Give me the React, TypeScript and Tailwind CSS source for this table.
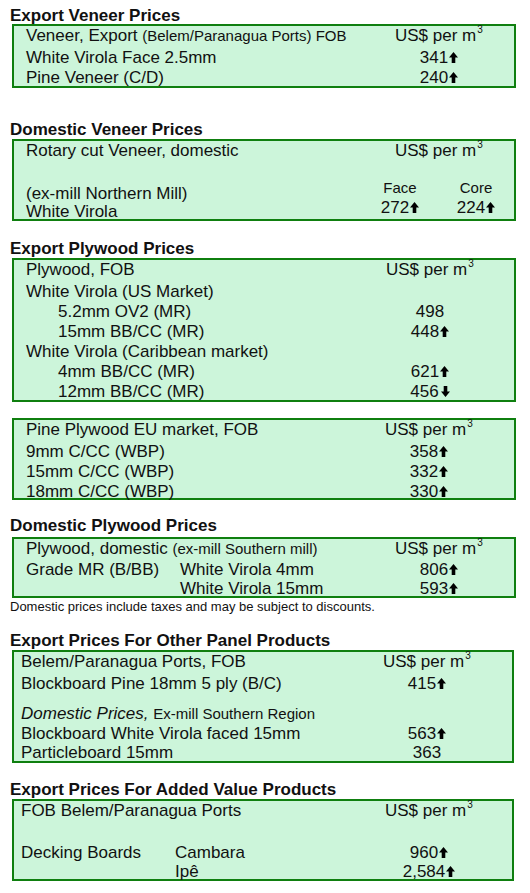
import React from 'react';

const Up = () => (
  <svg viewBox="0 0 9 11" className="inline-block w-[9px] h-[11px] ml-[1px] align-baseline" fill="#000">
    <path d="M4.5 0L9 5.6H6.3V11H2.7V5.6H0Z" />
  </svg>
);

const Down = () => (
  <svg viewBox="0 0 9 11" className="inline-block w-[9px] h-[11px] ml-[2px] align-baseline" fill="#000">
    <path d="M4.5 11L9 5.4H6.3V0H2.7V5.4H0Z" />
  </svg>
);

const Unit = () => (
  <span className="whitespace-nowrap">
    US$ per m<span className="relative -top-[8px] ml-[1px] text-[10px]">3</span>
  </span>
);

const Heading: React.FC<{ children: React.ReactNode; className?: string }> = ({ children, className = '' }) => (
  <h2 className={`text-[17px] font-bold leading-[17px] text-[#111] ${className}`}>{children}</h2>
);

const Box: React.FC<{ children: React.ReactNode; className?: string }> = ({ children, className = '' }) => (
  <div className={`ml-[2px] border-2 border-[#0f7f0f] bg-[#ccf5da] text-[17px] leading-5 text-[#111] ${className}`}>
    {children}
  </div>
);

// label column + centred value column
const Row: React.FC<{ label: React.ReactNode; value?: React.ReactNode; lw: string; indent?: boolean }> = ({
  label,
  value,
  lw,
  indent = false,
}) => (
  <div className="flex">
    <div className={`${lw} whitespace-nowrap ${indent ? 'pl-8' : ''}`}>{label}</div>
    <div className="w-[88px] text-center whitespace-nowrap">{value}</div>
  </div>
);

export default function App() {
  return (
    <div className="min-h-[893px] w-[530px] bg-white px-[10px] pt-[7px] font-['Liberation_Sans',Arial,sans-serif]">
      {/* Export Veneer */}
      <Heading>Export Veneer Prices</Heading>
      <Box className="w-[504px] h-[64px] pl-[12px]">
        <div className="flex">
          <div className="w-[369px] whitespace-nowrap">
            Veneer, Export <span className="text-[15px]">(Belem/Paranagua Ports) FOB</span>
          </div>
          <Unit />
        </div>
        <Row lw="w-[369px]" label="White Virola Face 2.5mm" value={<>341<Up /></>} />
        <Row lw="w-[369px]" label="Pine Veneer (C/D)" value={<>240<Up /></>} />
      </Box>

      {/* Domestic Veneer */}
      <Heading className="mt-[33px]">Domestic Veneer Prices</Heading>
      <Box className="mt-[1px] w-[504px] h-[82px] pl-[12px]">
        <div className="flex">
          <div className="w-[369px] whitespace-nowrap">Rotary cut Veneer, domestic</div>
          <Unit />
        </div>
        <div className="mt-[15px] flex items-end">
          <div className="w-[339px] leading-[18px]">
            <div>(ex-mill Northern Mill)</div>
            <div>White Virola</div>
          </div>
          <div className="w-[70px] pb-[3px] text-center">
            <div className="text-[15px]">Face</div>
            <div>272<Up /></div>
          </div>
          <div className="ml-[6px] w-[70px] pb-[3px] text-center">
            <div className="text-[15px]">Core</div>
            <div>224<Up /></div>
          </div>
        </div>
      </Box>

      {/* Export Plywood */}
      <Heading className="mt-[19px]">Export Plywood Prices</Heading>
      <Box className="mt-[1px] w-[504px] h-[144px] pl-[12px]">
        <div className="flex">
          <div className="w-[360px]">Plywood, FOB</div>
          <Unit />
        </div>
        <Row lw="w-[360px]" label="White Virola (US Market)" />
        <Row lw="w-[360px]" indent label="5.2mm OV2 (MR)" value="498" />
        <Row lw="w-[360px]" indent label="15mm BB/CC (MR)" value={<>448<Up /></>} />
        <Row lw="w-[360px]" label="White Virola (Caribbean market)" />
        <Row lw="w-[360px]" indent label="4mm BB/CC (MR)" value={<>621<Up /></>} />
        <Row lw="w-[360px]" indent label="12mm BB/CC (MR)" value={<>456<Down /></>} />
      </Box>

      <Box className="mt-[16px] w-[504px] h-[82px] pl-[12px]">
        <div className="flex">
          <div className="w-[359px]">Pine Plywood EU market, FOB</div>
          <Unit />
        </div>
        <Row lw="w-[359px]" label="9mm C/CC (WBP)" value={<>358<Up /></>} />
        <Row lw="w-[359px]" label="15mm C/CC (WBP)" value={<>332<Up /></>} />
        <Row lw="w-[359px]" label="18mm C/CC (WBP)" value={<>330<Up /></>} />
      </Box>

      {/* Domestic Plywood */}
      <Heading className="mt-[17px]">Domestic Plywood Prices</Heading>
      <Box className="mt-[3px] w-[504px] h-[61px] pl-[12px] leading-[19px]">
        <div className="flex">
          <div className="w-[369px] whitespace-nowrap">
            Plywood, domestic <span className="text-[15px]">(ex-mill Southern mill)</span>
          </div>
          <Unit />
        </div>
        <div className="flex">
          <div className="w-[154px]">Grade MR (B/BB)</div>
          <div className="w-[215px]">White Virola 4mm</div>
          <div className="w-[88px] text-center">806<Up /></div>
        </div>
        <div className="flex">
          <div className="w-[154px]" />
          <div className="w-[215px]">White Virola 15mm</div>
          <div className="w-[88px] text-center">593<Up /></div>
        </div>
      </Box>
      <p className="mt-[1px] text-[13px] leading-[15px] text-[#111]">
        Domestic prices include taxes and may be subject to discounts.
      </p>

      {/* Other panel products */}
      <Heading className="mt-[18px]">Export Prices For Other Panel Products</Heading>
      <Box className="mt-[1px] w-[502px] h-[113px] pl-[7px] leading-[19.5px]">
        <div className="flex">
          <div className="w-[362px]">Belem/Paranagua Ports, FOB</div>
          <Unit />
        </div>
        <Row lw="w-[362px]" label="Blockboard Pine 18mm 5 ply (B/C)" value={<>415<Up /></>} />
        <div className="mt-[11px]">
          <Row
            lw="w-[362px]"
            label={
              <>
                <i>Domestic Prices,</i> <span className="text-[15px]">Ex-mill Southern Region</span>
              </>
            }
          />
          <Row lw="w-[362px]" label="Blockboard White Virola faced 15mm" value={<>563<Up /></>} />
          <Row lw="w-[362px]" label="Particleboard 15mm" value="363" />
        </div>
      </Box>

      {/* Added value */}
      <Heading className="mt-[18px]">Export Prices For Added Value Products</Heading>
      <Box className="mt-[1px] w-[502px] h-[82px] pl-[7px]">
        <div className="flex">
          <div className="w-[364px]">FOB Belem/Paranagua Ports</div>
          <Unit />
        </div>
        <div className="mt-5 flex">
          <div className="w-[154px]">Decking Boards</div>
          <div className="w-[210px]">Cambara</div>
          <div className="w-[88px] text-center">960<Up /></div>
        </div>
        <div className="flex leading-[18px]">
          <div className="w-[154px]" />
          <div className="w-[210px]">Ipê</div>
          <div className="w-[88px] text-center">2,584<Up /></div>
        </div>
      </Box>
    </div>
  );
}
